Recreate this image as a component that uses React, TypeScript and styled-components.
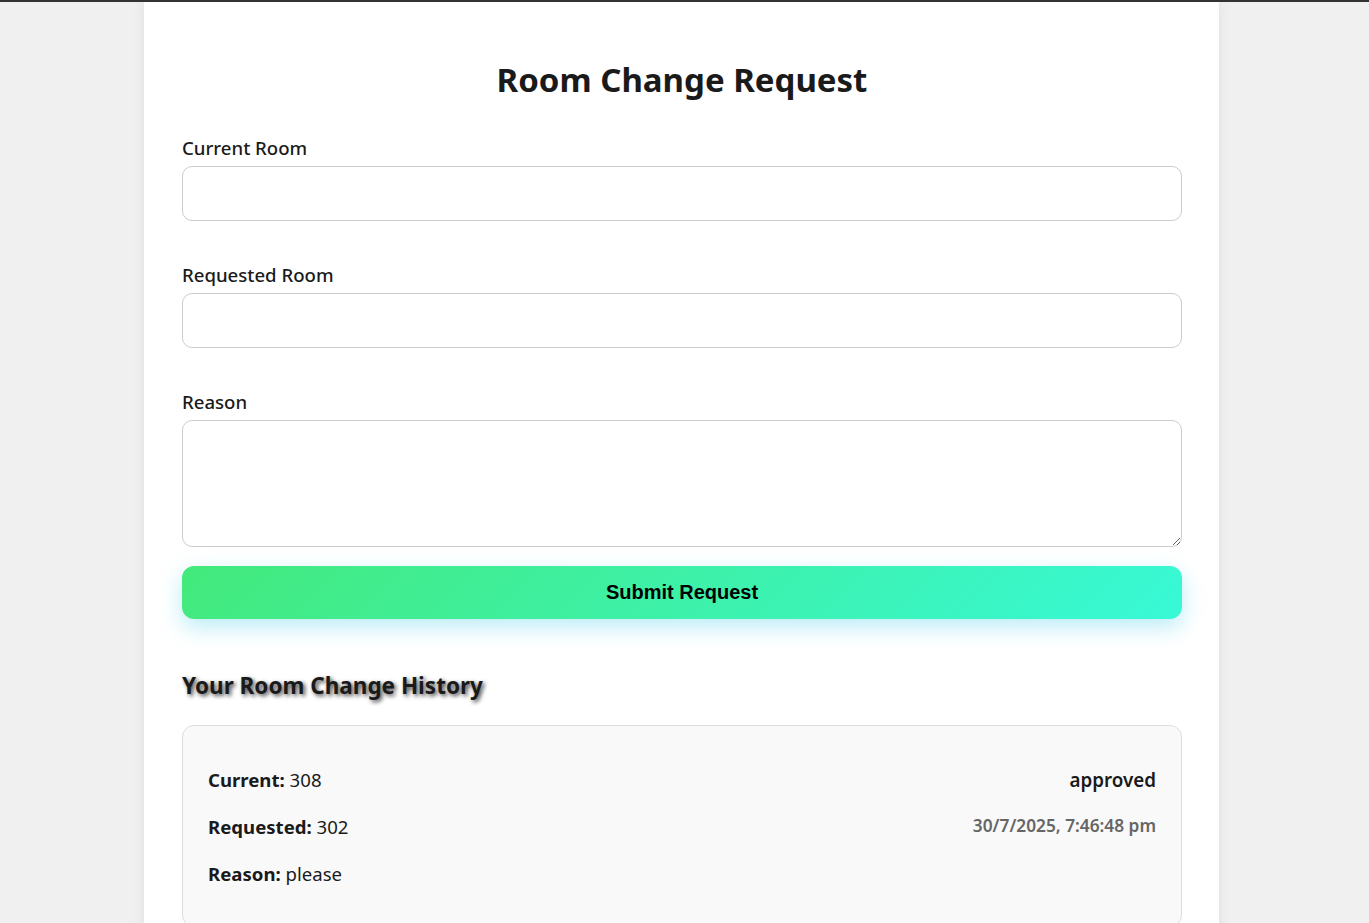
import React, { useState } from 'react';
import styled, { createGlobalStyle } from 'styled-components';

const GlobalStyle = createGlobalStyle`
  html, body {
    margin: 0;
    padding: 0;
  }
  body {
    background: #f0f0f0;
    border-top: 2px solid #333;
    font-family: "Segoe UI", "Noto Sans", sans-serif;
    color: #1a1a1a;
  }
`;

const Page = styled.div`
  padding-left: 144px;
  min-height: 921px;
`;

const Container = styled.div`
  width: 1075px;
  box-sizing: border-box;
  min-height: 921px;
  background: #fff;
  padding: 57px 37px 40px 38px;
  box-shadow: 0 0 12px rgba(0, 0, 0, 0.08);
`;

const Title = styled.h2`
  text-align: center;
  font-size: 33px;
  font-weight: 700;
  margin: 0 0 35px;
  line-height: 42px;
`;

const Field = styled.div<{ $gap?: number }>`
  display: flex;
  flex-direction: column;
  margin-bottom: ${(p) => p.$gap ?? 42}px;
`;

const Label = styled.label`
  font-size: 18.6px;
  font-weight: 500;
  line-height: 24px;
  margin-bottom: 6px;
`;

const Input = styled.input`
  height: 55px;
  box-sizing: border-box;
  border: 1px solid #ccc;
  border-radius: 10px;
  padding: 0 14px;
  font-size: 16px;
  font-family: inherit;
  outline: none;
`;

const TextArea = styled.textarea`
  height: 127px;
  box-sizing: border-box;
  border: 1px solid #ccc;
  border-radius: 10px;
  padding: 12px 14px;
  font-size: 16px;
  font-family: inherit;
  resize: vertical;
  outline: none;
`;

const SubmitButton = styled.button`
  width: 100%;
  height: 53px;
  border: none;
  border-radius: 12px;
  background: linear-gradient(135deg, #43e97b 0%, #38f9d7 100%);
  box-shadow: 0 8px 22px rgba(56, 200, 230, 0.35);
  font-family: "Liberation Sans", Arial, sans-serif;
  font-weight: 700;
  font-size: 20px;
  color: #000;
  cursor: pointer;
`;

const HistoryTitle = styled.h3`
  font-size: 22.5px;
  font-weight: 700;
  line-height: 30px;
  margin: 52px 0 24px;
  text-shadow: 2px 2px 4px rgba(0, 0, 0, 0.75);
`;

const Card = styled.div`
  display: flex;
  justify-content: space-between;
  border: 1px solid #ddd;
  border-radius: 12px;
  background: #f9f9f9;
  padding: 42px 25px 40px;
`;

const Details = styled.div`
  display: flex;
  flex-direction: column;
  gap: 23px;
  font-size: 18.6px;
  line-height: 24px;
`;

const Meta = styled.div`
  display: flex;
  flex-direction: column;
  align-items: flex-end;
  gap: 23px;
`;

const Status = styled.span`
  font-size: 18.8px;
  font-weight: 600;
  line-height: 24px;
`;

const Stamp = styled.span`
  font-size: 17.3px;
  font-weight: 600;
  color: #666;
  line-height: 22px;
`;

const history = [
  {
    current: '308',
    requested: '302',
    reason: 'please',
    status: 'approved',
    date: '30/7/2025, 7:46:48 pm',
  },
];

export default function App() {
  const [current, setCurrent] = useState('');
  const [requested, setRequested] = useState('');
  const [reason, setReason] = useState('');

  return (
    <Page>
      <GlobalStyle />
      <Container>
        <Title>Room Change Request</Title>
        <form onSubmit={(e) => e.preventDefault()}>
          <Field>
            <Label>Current Room</Label>
            <Input value={current} onChange={(e) => setCurrent(e.target.value)} />
          </Field>
          <Field>
            <Label>Requested Room</Label>
            <Input value={requested} onChange={(e) => setRequested(e.target.value)} />
          </Field>
          <Field $gap={19}>
            <Label>Reason</Label>
            <TextArea value={reason} onChange={(e) => setReason(e.target.value)} />
          </Field>
          <SubmitButton type="submit">Submit Request</SubmitButton>
        </form>

        <HistoryTitle>Your Room Change History</HistoryTitle>
        {history.map((h, i) => (
          <Card key={i}>
            <Details>
              <div><b>Current:</b> {h.current}</div>
              <div><b>Requested:</b> {h.requested}</div>
              <div><b>Reason:</b> {h.reason}</div>
            </Details>
            <Meta>
              <Status>{h.status}</Status>
              <Stamp>{h.date}</Stamp>
            </Meta>
          </Card>
        ))}
      </Container>
    </Page>
  );
}
